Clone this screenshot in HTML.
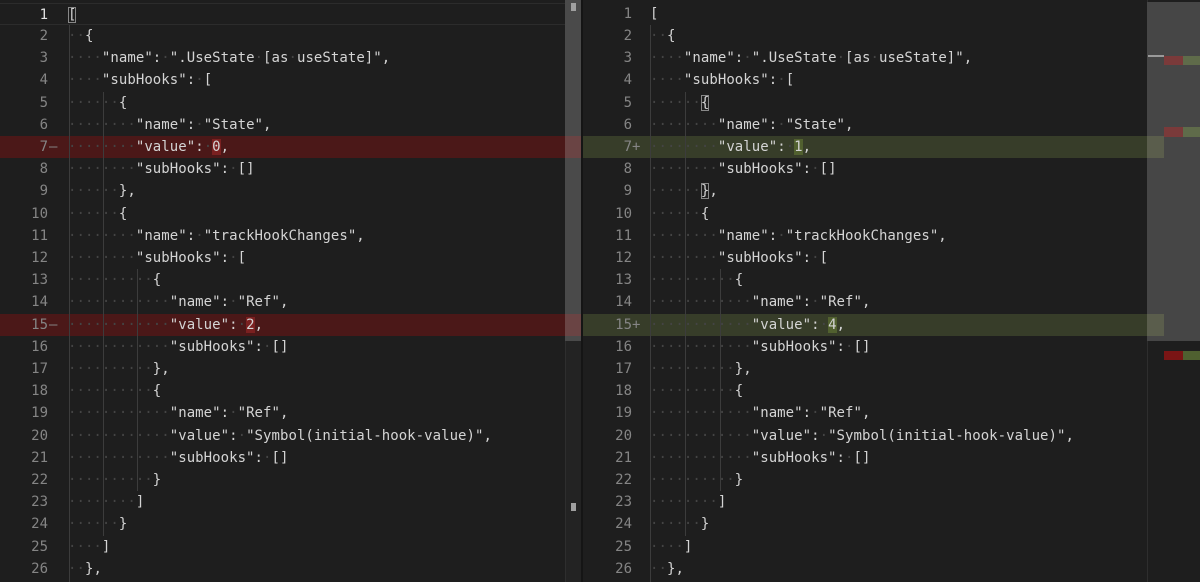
<!DOCTYPE html>
<html><head><meta charset="utf-8"><style>
*{margin:0;padding:0;box-sizing:border-box}
body{width:1200px;height:582px;background:#1e1e1e;overflow:hidden;position:relative;font-family:"DejaVu Sans Mono","Liberation Mono",monospace;font-size:14px;color:#d4d4d4}
.pane{position:absolute;top:0;height:582px;overflow:hidden}
.row{position:absolute;left:0;right:0;height:22px;line-height:22px;white-space:pre}
.num{position:absolute;text-align:right;color:#858585}
.mk{position:absolute;color:#858585}
.code{position:absolute;letter-spacing:0.05px}
b{font-weight:normal;color:#444}
.del{background:#4b1818}
.add{background:#373d29}
.dc{background:#7a2020}
.ac{background:#51602f}
.br{outline:1px solid #888;outline-offset:-1px}
.g{position:absolute;width:1px;background:#3c3c3c}
</style></head><body>

<div class="pane" style="left:0;width:565px">
<div class="row" style="top:3px;border-top:1px solid #2c2c2c;border-bottom:1px solid #2c2c2c"><span class="num" style="left:0;width:48px;color:#e0e0e0">1</span><span class="code" style="left:68px"><span class="br">[</span></span></div>
<div class="row" style="top:25px"><span class="num" style="left:0;width:48px">2</span><span class="code" style="left:68px"><b>··</b>{</span></div>
<div class="row" style="top:47px"><span class="num" style="left:0;width:48px">3</span><span class="code" style="left:68px"><b>····</b>"name":<b>·</b>".UseState<b>·</b>[as<b>·</b>useState]",</span></div>
<div class="row" style="top:69px"><span class="num" style="left:0;width:48px">4</span><span class="code" style="left:68px"><b>····</b>"subHooks":<b>·</b>[</span></div>
<div class="row" style="top:92px"><span class="num" style="left:0;width:48px">5</span><span class="code" style="left:68px"><b>······</b>{</span></div>
<div class="row" style="top:114px"><span class="num" style="left:0;width:48px">6</span><span class="code" style="left:68px"><b>········</b>"name":<b>·</b>"State",</span></div>
<div class="row del" style="top:136px"><span class="num" style="left:0;width:48px">7</span><span class="mk" style="left:49px">—</span><span class="code" style="left:68px"><b>········</b>"value":<b>·</b><span class="dc">0</span>,</span></div>
<div class="row" style="top:158px"><span class="num" style="left:0;width:48px">8</span><span class="code" style="left:68px"><b>········</b>"subHooks":<b>·</b>[]</span></div>
<div class="row" style="top:180px"><span class="num" style="left:0;width:48px">9</span><span class="code" style="left:68px"><b>······</b>},</span></div>
<div class="row" style="top:203px"><span class="num" style="left:0;width:48px">10</span><span class="code" style="left:68px"><b>······</b>{</span></div>
<div class="row" style="top:225px"><span class="num" style="left:0;width:48px">11</span><span class="code" style="left:68px"><b>········</b>"name":<b>·</b>"trackHookChanges",</span></div>
<div class="row" style="top:247px"><span class="num" style="left:0;width:48px">12</span><span class="code" style="left:68px"><b>········</b>"subHooks":<b>·</b>[</span></div>
<div class="row" style="top:269px"><span class="num" style="left:0;width:48px">13</span><span class="code" style="left:68px"><b>··········</b>{</span></div>
<div class="row" style="top:291px"><span class="num" style="left:0;width:48px">14</span><span class="code" style="left:68px"><b>············</b>"name":<b>·</b>"Ref",</span></div>
<div class="row del" style="top:314px"><span class="num" style="left:0;width:48px">15</span><span class="mk" style="left:49px">—</span><span class="code" style="left:68px"><b>············</b>"value":<b>·</b><span class="dc">2</span>,</span></div>
<div class="row" style="top:336px"><span class="num" style="left:0;width:48px">16</span><span class="code" style="left:68px"><b>············</b>"subHooks":<b>·</b>[]</span></div>
<div class="row" style="top:358px"><span class="num" style="left:0;width:48px">17</span><span class="code" style="left:68px"><b>··········</b>},</span></div>
<div class="row" style="top:380px"><span class="num" style="left:0;width:48px">18</span><span class="code" style="left:68px"><b>··········</b>{</span></div>
<div class="row" style="top:402px"><span class="num" style="left:0;width:48px">19</span><span class="code" style="left:68px"><b>············</b>"name":<b>·</b>"Ref",</span></div>
<div class="row" style="top:425px"><span class="num" style="left:0;width:48px">20</span><span class="code" style="left:68px"><b>············</b>"value":<b>·</b>"Symbol(initial-hook-value)",</span></div>
<div class="row" style="top:447px"><span class="num" style="left:0;width:48px">21</span><span class="code" style="left:68px"><b>············</b>"subHooks":<b>·</b>[]</span></div>
<div class="row" style="top:469px"><span class="num" style="left:0;width:48px">22</span><span class="code" style="left:68px"><b>··········</b>}</span></div>
<div class="row" style="top:491px"><span class="num" style="left:0;width:48px">23</span><span class="code" style="left:68px"><b>········</b>]</span></div>
<div class="row" style="top:513px"><span class="num" style="left:0;width:48px">24</span><span class="code" style="left:68px"><b>······</b>}</span></div>
<div class="row" style="top:536px"><span class="num" style="left:0;width:48px">25</span><span class="code" style="left:68px"><b>····</b>]</span></div>
<div class="row" style="top:558px"><span class="num" style="left:0;width:48px">26</span><span class="code" style="left:68px"><b>··</b>},</span></div>
<div class="g" style="left:69px;top:25px;height:557px"></div>
<div class="g" style="left:103px;top:92px;height:444px"></div>
<div class="g" style="left:137px;top:269px;height:222px"></div>
</div>
<div style="position:absolute;left:565px;top:0;width:16px;height:582px;background:#232323;border-left:1px solid #2e2e2e"></div>
<div style="position:absolute;left:565px;top:0;width:16px;height:341px;background:#4a4a4a"></div>
<div style="position:absolute;left:565px;top:136px;width:16px;height:22px;background:#6a4444"></div>
<div style="position:absolute;left:565px;top:314px;width:16px;height:22px;background:#6a4444"></div>
<div style="position:absolute;left:571px;top:3px;width:5px;height:8px;background:#a0a0a0"></div>
<div style="position:absolute;left:571px;top:503px;width:5px;height:8px;background:#a0a0a0"></div>
<div style="position:absolute;left:581px;top:0;width:2px;height:582px;background:#151515"></div>

<div class="pane" style="left:583px;width:564px">
<div class="row" style="top:3px"><span class="num" style="left:0;width:49px">1</span><span class="code" style="left:67px">[</span></div>
<div class="row" style="top:25px"><span class="num" style="left:0;width:49px">2</span><span class="code" style="left:67px"><b>··</b>{</span></div>
<div class="row" style="top:47px"><span class="num" style="left:0;width:49px">3</span><span class="code" style="left:67px"><b>····</b>"name":<b>·</b>".UseState<b>·</b>[as<b>·</b>useState]",</span></div>
<div class="row" style="top:69px"><span class="num" style="left:0;width:49px">4</span><span class="code" style="left:67px"><b>····</b>"subHooks":<b>·</b>[</span></div>
<div class="row" style="top:92px"><span class="num" style="left:0;width:49px">5</span><span class="code" style="left:67px"><b>······</b><span class="br">{</span></span></div>
<div class="row" style="top:114px"><span class="num" style="left:0;width:49px">6</span><span class="code" style="left:67px"><b>········</b>"name":<b>·</b>"State",</span></div>
<div class="row add" style="top:136px;right:-17px"><span class="num" style="left:0;width:49px">7</span><span class="mk" style="left:49px">+</span><span class="code" style="left:67px"><b>········</b>"value":<b>·</b><span class="ac">1</span>,</span></div>
<div class="row" style="top:158px"><span class="num" style="left:0;width:49px">8</span><span class="code" style="left:67px"><b>········</b>"subHooks":<b>·</b>[]</span></div>
<div class="row" style="top:180px"><span class="num" style="left:0;width:49px">9</span><span class="code" style="left:67px"><b>······</b><span class="br">}</span>,</span></div>
<div class="row" style="top:203px"><span class="num" style="left:0;width:49px">10</span><span class="code" style="left:67px"><b>······</b>{</span></div>
<div class="row" style="top:225px"><span class="num" style="left:0;width:49px">11</span><span class="code" style="left:67px"><b>········</b>"name":<b>·</b>"trackHookChanges",</span></div>
<div class="row" style="top:247px"><span class="num" style="left:0;width:49px">12</span><span class="code" style="left:67px"><b>········</b>"subHooks":<b>·</b>[</span></div>
<div class="row" style="top:269px"><span class="num" style="left:0;width:49px">13</span><span class="code" style="left:67px"><b>··········</b>{</span></div>
<div class="row" style="top:291px"><span class="num" style="left:0;width:49px">14</span><span class="code" style="left:67px"><b>············</b>"name":<b>·</b>"Ref",</span></div>
<div class="row add" style="top:314px;right:-17px"><span class="num" style="left:0;width:49px">15</span><span class="mk" style="left:49px">+</span><span class="code" style="left:67px"><b>············</b>"value":<b>·</b><span class="ac">4</span>,</span></div>
<div class="row" style="top:336px"><span class="num" style="left:0;width:49px">16</span><span class="code" style="left:67px"><b>············</b>"subHooks":<b>·</b>[]</span></div>
<div class="row" style="top:358px"><span class="num" style="left:0;width:49px">17</span><span class="code" style="left:67px"><b>··········</b>},</span></div>
<div class="row" style="top:380px"><span class="num" style="left:0;width:49px">18</span><span class="code" style="left:67px"><b>··········</b>{</span></div>
<div class="row" style="top:402px"><span class="num" style="left:0;width:49px">19</span><span class="code" style="left:67px"><b>············</b>"name":<b>·</b>"Ref",</span></div>
<div class="row" style="top:425px"><span class="num" style="left:0;width:49px">20</span><span class="code" style="left:67px"><b>············</b>"value":<b>·</b>"Symbol(initial-hook-value)",</span></div>
<div class="row" style="top:447px"><span class="num" style="left:0;width:49px">21</span><span class="code" style="left:67px"><b>············</b>"subHooks":<b>·</b>[]</span></div>
<div class="row" style="top:469px"><span class="num" style="left:0;width:49px">22</span><span class="code" style="left:67px"><b>··········</b>}</span></div>
<div class="row" style="top:491px"><span class="num" style="left:0;width:49px">23</span><span class="code" style="left:67px"><b>········</b>]</span></div>
<div class="row" style="top:513px"><span class="num" style="left:0;width:49px">24</span><span class="code" style="left:67px"><b>······</b>}</span></div>
<div class="row" style="top:536px"><span class="num" style="left:0;width:49px">25</span><span class="code" style="left:67px"><b>····</b>]</span></div>
<div class="row" style="top:558px"><span class="num" style="left:0;width:49px">26</span><span class="code" style="left:67px"><b>··</b>},</span></div>
<div class="g" style="left:67px;top:25px;height:557px"></div>
<div class="g" style="left:102px;top:92px;height:444px"></div>
<div class="g" style="left:137px;top:269px;height:222px"></div>
</div>

<div style="position:absolute;left:1147px;top:0;width:53px;height:582px;background:#1e1e1e;border-left:1px solid #2e2e2e"></div>
<div style="position:absolute;left:1147px;top:2px;width:53px;height:339px;background:#464646"></div>
<div style="position:absolute;left:1147px;top:136px;width:17px;height:22px;background:#5a5d4c"></div>
<div style="position:absolute;left:1147px;top:314px;width:17px;height:22px;background:#5a5d4c"></div>
<div style="position:absolute;left:1148px;top:55px;width:16px;height:2px;background:#9a9a9a"></div>
<div style="position:absolute;left:1164px;top:56px;width:19px;height:9px;background:#7a3a3a"></div>
<div style="position:absolute;left:1183px;top:56px;width:17px;height:9px;background:#5f6b4a"></div>
<div style="position:absolute;left:1164px;top:127px;width:19px;height:10px;background:#7a3a3a"></div>
<div style="position:absolute;left:1183px;top:127px;width:17px;height:10px;background:#5f6b4a"></div>
<div style="position:absolute;left:1164px;top:351px;width:19px;height:9px;background:#7a1515"></div>
<div style="position:absolute;left:1183px;top:351px;width:17px;height:9px;background:#4f6030"></div>
</body></html>
